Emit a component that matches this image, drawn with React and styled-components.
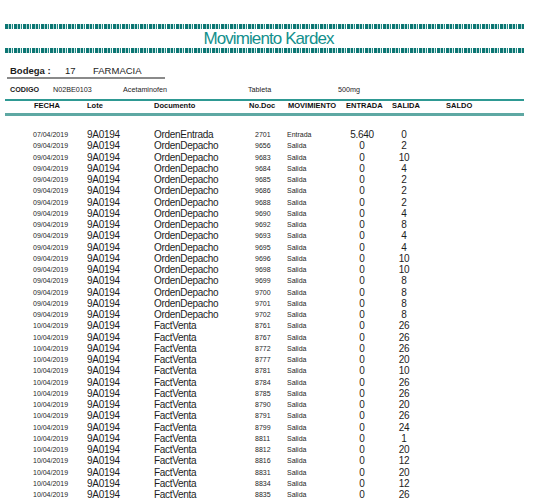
import React from "react";
import styled, { createGlobalStyle } from "styled-components";

const Global = createGlobalStyle`
  html, body { margin: 0; padding: 0; background: #fff; }
  body { font-family: "Liberation Sans", Arial, sans-serif; color: #1c1c1c; }
`;

const Page = styled.div`
  width: 519px;
  margin-left: 5px;
  padding-top: 24px;
`;

const DashBar = styled.div`
  height: 5px;
  background: repeating-linear-gradient(
    90deg,
    #0d7673 0px, #0d7673 3px,
    #a9d4d2 3px, #a9d4d2 4px,
    #0d7673 4px, #0d7673 6px,
    #d6ecea 6px, #d6ecea 7px,
    #1a8582 7px, #1a8582 8px,
    #ffffff 8px, #ffffff 9px
  );
`;

const Title = styled.h1`
  margin: 0;
  height: 19px;
  line-height: 19px;
  font-size: 17px;
  font-weight: normal;
  letter-spacing: -0.9px;
  text-align: center;
  color: #13908d;
  padding-left: 8px;
`;

const BodegaRow = styled.div`
  margin-left: 2px;
  width: 158px;
  height: 26px;
  display: grid;
  grid-template-columns: 55px 28px 1fr;
  align-items: end;
  padding-left: 3px;
  box-sizing: border-box;
  border-bottom: 2px solid #8a8a8a;
  font-size: 9.5px;
  line-height: 11px;
  padding-bottom: 1px;
`;

const Label = styled.span`
  font-weight: ${(p) => (p.$bold ? "bold" : "normal")};
`;

const CodigoRow = styled.div`
  margin-top: 5px;
  height: 12px;
  line-height: 12px;
  display: grid;
  grid-template-columns: 43px 70px 125px 90px 1fr;
  padding-left: 5px;
  font-size: 7.2px;
`;

const HeaderRow = styled.div`
  margin-top: 3px;
  border-top: 2px solid #2e9993;
  border-bottom: 3px solid #5ea8a3;
  height: 11px;
  padding-top: 1px;
  box-sizing: content-box;
  display: grid;
  grid-template-columns: 53px 67px 95px 39px 58px 46px 54px 1fr;
  padding-left: 29px;
  font-size: 7.5px;
  font-weight: bold;
  line-height: 8px;
  color: #111;
`;

const Body = styled.div`
  margin-top: 13px;
`;

const Row = styled.div`
  display: grid;
  grid-template-columns: 54px 67px 101px 32px 55px 40px 44px;
  padding-left: 28px;
  height: 11.25px;
  line-height: 11.25px;
  align-items: center;
  white-space: nowrap;
`;

const Small = styled.span`
  font-size: 7px;
  color: #262626;
`;

const Big = styled.span`
  font-size: 10px;
  letter-spacing: -0.3px;
  color: #1c1c1c;
  text-align: ${(p) => (p.$center ? "center" : "left")};
`;

const rows = [
  ["07/04/2019", "OrdenEntrada", "2701", "Entrada", "5.640", "0"],
  ["09/04/2019", "OrdenDepacho", "9656", "Salida", "0", "2"],
  ["09/04/2019", "OrdenDepacho", "9683", "Salida", "0", "10"],
  ["09/04/2019", "OrdenDepacho", "9684", "Salida", "0", "4"],
  ["09/04/2019", "OrdenDepacho", "9685", "Salida", "0", "2"],
  ["09/04/2019", "OrdenDepacho", "9686", "Salida", "0", "2"],
  ["09/04/2019", "OrdenDepacho", "9688", "Salida", "0", "2"],
  ["09/04/2019", "OrdenDepacho", "9690", "Salida", "0", "4"],
  ["09/04/2019", "OrdenDepacho", "9692", "Salida", "0", "8"],
  ["09/04/2019", "OrdenDepacho", "9693", "Salida", "0", "4"],
  ["09/04/2019", "OrdenDepacho", "9695", "Salida", "0", "4"],
  ["09/04/2019", "OrdenDepacho", "9696", "Salida", "0", "10"],
  ["09/04/2019", "OrdenDepacho", "9698", "Salida", "0", "10"],
  ["09/04/2019", "OrdenDepacho", "9699", "Salida", "0", "8"],
  ["09/04/2019", "OrdenDepacho", "9700", "Salida", "0", "8"],
  ["09/04/2019", "OrdenDepacho", "9701", "Salida", "0", "8"],
  ["09/04/2019", "OrdenDepacho", "9702", "Salida", "0", "8"],
  ["10/04/2019", "FactVenta", "8761", "Salida", "0", "26"],
  ["10/04/2019", "FactVenta", "8767", "Salida", "0", "26"],
  ["10/04/2019", "FactVenta", "8772", "Salida", "0", "26"],
  ["10/04/2019", "FactVenta", "8777", "Salida", "0", "20"],
  ["10/04/2019", "FactVenta", "8781", "Salida", "0", "10"],
  ["10/04/2019", "FactVenta", "8784", "Salida", "0", "26"],
  ["10/04/2019", "FactVenta", "8785", "Salida", "0", "26"],
  ["10/04/2019", "FactVenta", "8790", "Salida", "0", "20"],
  ["10/04/2019", "FactVenta", "8791", "Salida", "0", "26"],
  ["10/04/2019", "FactVenta", "8799", "Salida", "0", "24"],
  ["10/04/2019", "FactVenta", "8811", "Salida", "0", "1"],
  ["10/04/2019", "FactVenta", "8812", "Salida", "0", "20"],
  ["10/04/2019", "FactVenta", "8816", "Salida", "0", "12"],
  ["10/04/2019", "FactVenta", "8831", "Salida", "0", "20"],
  ["10/04/2019", "FactVenta", "8834", "Salida", "0", "12"],
  ["10/04/2019", "FactVenta", "8835", "Salida", "0", "26"],
];

export default function App() {
  return (
    <>
      <Global />
      <Page>
        <DashBar />
        <Title>Movimiento Kardex</Title>
        <DashBar />
        <BodegaRow>
          <Label $bold>Bodega :</Label>
          <Label>17</Label>
          <Label>FARMACIA</Label>
        </BodegaRow>
        <CodigoRow>
          <Label $bold>CODIGO</Label>
          <Label>N02BE0103</Label>
          <Label>Acetaminofen</Label>
          <Label>Tableta</Label>
          <Label>500mg</Label>
        </CodigoRow>
        <HeaderRow>
          <span>FECHA</span>
          <span>Lote</span>
          <span>Documento</span>
          <span>No.Doc</span>
          <span>MOVIMIENTO</span>
          <span>ENTRADA</span>
          <span>SALIDA</span>
          <span>SALDO</span>
        </HeaderRow>
        <Body>
          {rows.map((r, i) => (
            <Row key={i}>
              <Small>{r[0]}</Small>
              <Big>9A0194</Big>
              <Big>{r[1]}</Big>
              <Small>{r[2]}</Small>
              <Small>{r[3]}</Small>
              <Big $center>{r[4]}</Big>
              <Big $center>{r[5]}</Big>
            </Row>
          ))}
        </Body>
      </Page>
    </>
  );
}
